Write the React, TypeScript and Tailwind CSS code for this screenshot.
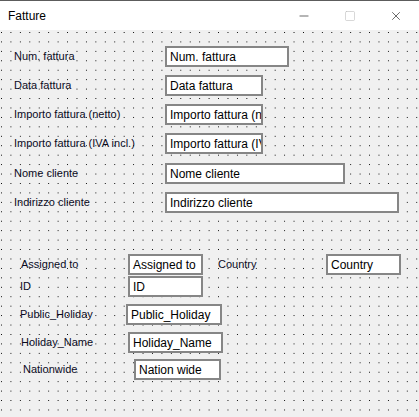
import { X, Minus, Square } from 'lucide-react';

type Field = {
  label: string;
  value: string;
  boxWidth: string;
  extra?: string;
};

const boxBase =
  'flex h-[21px] shrink-0 items-center overflow-hidden whitespace-nowrap border-2 border-[#868686] bg-white pl-[3px] text-[12px] text-black';

const labelBase = 'shrink-0 whitespace-nowrap text-[11px] text-[#0b0b1e]';

// campi della sezione superiore (Fatture)
const invoiceFields: Field[] = [
  { label: 'Num. fattura', value: 'Num. fattura', boxWidth: 'w-[124px]' },
  { label: 'Data fattura', value: 'Data fattura', boxWidth: 'w-[98px]' },
  { label: 'Importo fattura (netto)', value: 'Importo fattura (netto)', boxWidth: 'w-[98px]' },
  { label: 'Importo fattura (IVA incl.)', value: 'Importo fattura (IVA incl.)', boxWidth: 'w-[98px]' },
  { label: 'Nome cliente', value: 'Nome cliente', boxWidth: 'w-[180px]', extra: 'mt-px' },
  { label: 'Indirizzo cliente', value: 'Indirizzo cliente', boxWidth: 'w-[234px]' },
];

function TitleBar() {
  return (
    <div className="flex h-[30px] items-center border-t border-[#5c5c5c] bg-white pl-[8px]">
      <span className="text-[12px] text-black">Fatture</span>
      <div className="ml-auto flex items-center">
        <div className="flex w-[46px] justify-center">
          <Minus size={14} strokeWidth={1} className="text-black" />
        </div>
        <div className="flex w-[46px] justify-center">
          <Square size={12} strokeWidth={1.2} className="text-[#bdbdbd]" />
        </div>
        <div className="flex w-[46px] justify-center">
          <X size={14} strokeWidth={1} className="text-black" />
        </div>
      </div>
    </div>
  );
}

export default function App() {
  return (
    <div
      className="flex h-[417px] w-[419px] flex-col overflow-hidden"
      style={{ fontFamily: '"Liberation Sans", Arial, sans-serif' }}
    >
      <TitleBar />

      <div className="flex-1 bg-[#f0f0f0] bg-[radial-gradient(circle_at_0.5px_0.5px,#000_0.7px,transparent_0.7px)] bg-[length:9.45px_9.45px] bg-[position:1px_2px]">
        <div className="flex flex-col gap-2 pt-[16px]">
          {invoiceFields.map((field) => (
            <div key={field.label} className={`flex items-center pl-[14px] ${field.extra ?? ''}`}>
              <span className={`${labelBase} w-[151px]`}>{field.label}</span>
              <div className={`${boxBase} ${field.boxWidth}`}>{field.value}</div>
            </div>
          ))}
        </div>

        {/* sezione inferiore */}
        <div className="mt-[41px] flex items-center pl-[21px]">
          <span className={`${labelBase} w-[107px]`}>Assigned to</span>
          <div className={`${boxBase} w-[75px]`}>Assigned to</div>
          <span className={`${labelBase} ml-[15px] w-[108px]`}>Country</span>
          <div className={`${boxBase} w-[75px]`}>Country</div>
        </div>

        <div className="mt-px flex items-center pl-[20px]">
          <span className={`${labelBase} w-[108px]`}>ID</span>
          <div className={`${boxBase} w-[75px]`}>ID</div>
        </div>

        <div className="mt-[7px] flex items-center pl-[20px]">
          <span className={`${labelBase} w-[106px]`}>Public_Holiday</span>
          <div className={`${boxBase} w-[96px]`}>Public_Holiday</div>
        </div>

        <div className="mt-[7px] flex items-center pl-[21px]">
          <span className={`${labelBase} w-[107px]`}>Holiday_Name</span>
          <div className={`${boxBase} w-[95px]`}>Holiday_Name</div>
        </div>

        <div className="mt-[6px] flex items-center pl-[23px]">
          <span className={`${labelBase} w-[111px]`}>Nationwide</span>
          <div className={`${boxBase} w-[87px]`}>Nation wide</div>
        </div>
      </div>
    </div>
  );
}
